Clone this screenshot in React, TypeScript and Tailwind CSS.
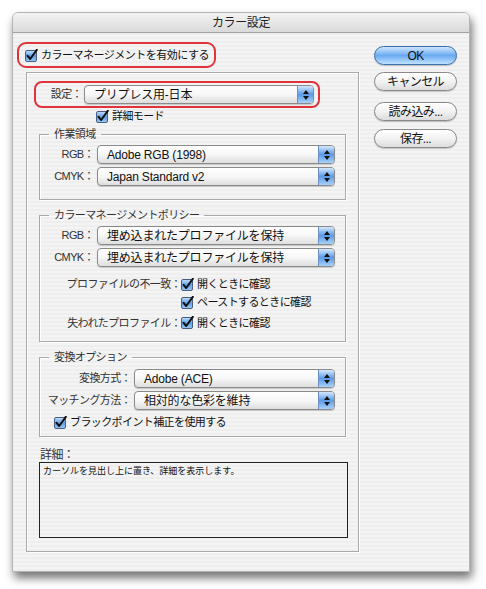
import React from "react";

const STRIPES =
  "bg-[repeating-linear-gradient(180deg,#eeeeee_0px,#eeeeee_2px,#f4f4f4_2px,#f4f4f4_4px)]";

function Check() {
  return (
    <svg width="13" height="13" viewBox="0 0 13 13" className="shrink-0">
      <defs>
        <linearGradient id="cb" x1="0" y1="0" x2="0" y2="1">
          <stop offset="0" stopColor="#c6e0fb" />
          <stop offset="0.5" stopColor="#5d9ee8" />
          <stop offset="1" stopColor="#9ccaf5" />
        </linearGradient>
      </defs>
      <rect x="0.5" y="1.5" width="11" height="11" rx="1.5" fill="url(#cb)" stroke="#4a5f80" />
      <path d="M2.6 6.8 L5.2 10 L11.8 0.8" fill="none" stroke="#111" strokeWidth="2" strokeLinecap="round" strokeLinejoin="round" />
    </svg>
  );
}

function Select({ value, w }: { value: string; w: string }) {
  return (
    <div
      className={`${w} h-[19px] flex rounded-[4px] border border-[#8a8a8a] bg-gradient-to-b from-white via-[#f7f7f7] to-[#dedede] shadow-[0_1px_1px_rgba(0,0,0,0.18)] overflow-hidden`}
    >
      <div className="flex-1 pl-[9px] flex items-center text-[12px] text-[#111] leading-none whitespace-nowrap tracking-[-0.2px]">
        {value}
      </div>
      <div className="w-[16px] border-l border-[#6b8fc0] bg-gradient-to-b from-[#d4e8fc] via-[#5a9ae6] to-[#a8d2f8] flex flex-col items-center justify-center gap-[2px]">
        <span className="w-0 h-0 border-l-[3px] border-r-[3px] border-b-[4px] border-l-transparent border-r-transparent border-b-[#111]" />
        <span className="w-0 h-0 border-l-[3px] border-r-[3px] border-t-[4px] border-l-transparent border-r-transparent border-t-[#111]" />
      </div>
    </div>
  );
}

function Btn({ label, primary, mt }: { label: string; primary?: boolean; mt: string }) {
  return (
    <div
      className={`${mt} h-[19px] w-[83px] rounded-full border flex items-center justify-center text-[12px] leading-none text-[#111] shadow-[0_1px_1px_rgba(0,0,0,0.2)] ${
        primary
          ? "border-[#3d6fb0] bg-gradient-to-b from-[#cfe6fd] via-[#6aaaf0] to-[#bfe2ff]"
          : "border-[#8a8a8a] bg-gradient-to-b from-white via-[#f2f2f2] to-[#dcdcdc]"
      }`}
    >
      {label}
    </div>
  );
}

function Row({ label, labelW, children, mt }: { label: string; labelW: string; children: React.ReactNode; mt?: string }) {
  return (
    <div className={`flex items-center ${mt ?? ""}`}>
      <div className={`${labelW} shrink-0 text-right text-[11px] text-[#333] whitespace-nowrap`}>{label}</div>
      {children}
    </div>
  );
}

function Group({ title, mt, className, children }: { title: string; mt: string; className: string; children: React.ReactNode }) {
  return (
    <fieldset
      className={`${mt} ${className} ml-[12px] w-[307px] border border-[#a9a9a9] shadow-[inset_1px_1px_0_#ffffff,1px_1px_0_#ffffff]`}
    >
      <legend className="ml-[9px] px-[5px] text-[11px] leading-[14px] text-[#333]">{title}</legend>
      {children}
    </fieldset>
  );
}

export default function App() {
  return (
    <div className="min-h-[589px] w-[486px] bg-white pl-[12px] pt-[12px] font-['Liberation_Sans','Noto_Sans_CJK_JP',sans-serif] tracking-[-0.6px]">
      <div
        className={`w-[458px] h-[560px] rounded-t-[6px] overflow-hidden border border-[#b4b4b4] ${STRIPES} shadow-[2px_6px_10px_rgba(0,0,0,0.55)]`}
      >
        {/* title bar */}
        <div className="h-[20px] flex items-center justify-center border-b border-[#a2a2a2] bg-gradient-to-b from-[#f3f3f3] to-[#dadada] text-[12px] text-[#222] tracking-[-0.4px]">
          カラー設定
        </div>

        <div className="flex">
          {/* left column */}
          <div className="w-[347px]">
            <div className="ml-[4px] mt-[9px] w-[199px] h-[26px] rounded-[9px] border-2 border-[#e0343a] flex items-center pl-[6px] gap-[3px]">
              <Check />
              <span className="text-[11px] text-[#111] whitespace-nowrap tracking-[-0.5px]">カラーマネージメントを有効にする</span>
            </div>

            <div className="ml-[13px] mt-[4px] w-[333px] h-[480px] border border-[#a9a9a9] shadow-[inset_1px_1px_0_#ffffff,1px_1px_0_#ffffff] pt-[8px]">
              <div className="ml-[7px] w-[286px] h-[27px] rounded-[8px] border-2 border-[#e0343a] flex items-center">
                <div className="w-[46px] text-right text-[11px] text-[#333]">設定：</div>
                <div className="ml-[2px]">
                  <Select value="プリプレス用-日本" w="w-[230px]" />
                </div>
              </div>

              <div className="ml-[69px] mt-[2px] flex items-center gap-[3px] h-[13px]">
                <Check />
                <span className="text-[11px] text-[#111]">詳細モード</span>
              </div>

              <Group title="作業領域" mt="mt-[4px]" className="pt-[4px] pb-[13px]">
                <Row label="RGB：" labelW="w-[54px]">
                  <div className="ml-[3px]">
                    <Select value="Adobe RGB (1998)" w="w-[238px]" />
                  </div>
                </Row>
                <Row label="CMYK：" labelW="w-[54px]" mt="mt-[3px]">
                  <div className="ml-[3px]">
                    <Select value="Japan Standard v2" w="w-[238px]" />
                  </div>
                </Row>
              </Group>

              <Group title="カラーマネージメントポリシー" mt="mt-[8px]" className="pt-[4px] pb-[10px]">
                <Row label="RGB：" labelW="w-[54px]">
                  <div className="ml-[3px]">
                    <Select value="埋め込まれたプロファイルを保持" w="w-[238px]" />
                  </div>
                </Row>
                <Row label="CMYK：" labelW="w-[54px]" mt="mt-[3px]">
                  <div className="ml-[3px]">
                    <Select value="埋め込まれたプロファイルを保持" w="w-[238px]" />
                  </div>
                </Row>
                <Row label="プロファイルの不一致：" labelW="w-[141px]" mt="mt-[9px]">
                  <div className="flex items-center gap-[3px] h-[16px]">
                    <Check />
                    <span className="text-[11px] text-[#111]">開くときに確認</span>
                  </div>
                </Row>
                <div className="ml-[141px] mt-[2px] flex items-center gap-[3px] h-[16px]">
                  <Check />
                  <span className="text-[11px] text-[#111] whitespace-nowrap">ペーストするときに確認</span>
                </div>
                <Row label="失われたプロファイル：" labelW="w-[141px]" mt="mt-[4px]">
                  <div className="flex items-center gap-[3px] h-[16px]">
                    <Check />
                    <span className="text-[11px] text-[#111]">開くときに確認</span>
                  </div>
                </Row>
              </Group>

              <Group title="変換オプション" mt="mt-[8px]" className="pt-[5px] pb-[7px]">
                <Row label="変換方式：" labelW="w-[91px]">
                  <div className="ml-[3px]">
                    <Select value="Adobe (ACE)" w="w-[201px]" />
                  </div>
                </Row>
                <Row label="マッチング方法：" labelW="w-[91px]" mt="mt-[3px]">
                  <div className="ml-[3px]">
                    <Select value="相対的な色彩を維持" w="w-[201px]" />
                  </div>
                </Row>
                <div className="ml-[14px] mt-[5px] flex items-center gap-[3px] h-[14px]">
                  <Check />
                  <span className="text-[11px] text-[#111] whitespace-nowrap">ブラックポイント補正を使用する</span>
                </div>
              </Group>

              <div className="ml-[13px] mt-[11px] text-[12px] leading-[14px] text-[#333]">詳細：</div>
              <div className="ml-[12px] w-[309px] h-[76px] border border-[#222] pl-[3px] pt-[2px] text-[9px] leading-[12px] text-[#111] tracking-normal">
                カーソルを見出し上に置き、詳細を表示します。
              </div>
            </div>
          </div>

          {/* right column */}
          <div className="ml-[14px] pt-[13px] flex flex-col">
            <Btn label="OK" primary mt="mt-0" />
            <Btn label="キャンセル" mt="mt-[7px]" />
            <Btn label="読み込み..." mt="mt-[11px]" />
            <Btn label="保存..." mt="mt-[8px]" />
          </div>
        </div>
      </div>
    </div>
  );
}
